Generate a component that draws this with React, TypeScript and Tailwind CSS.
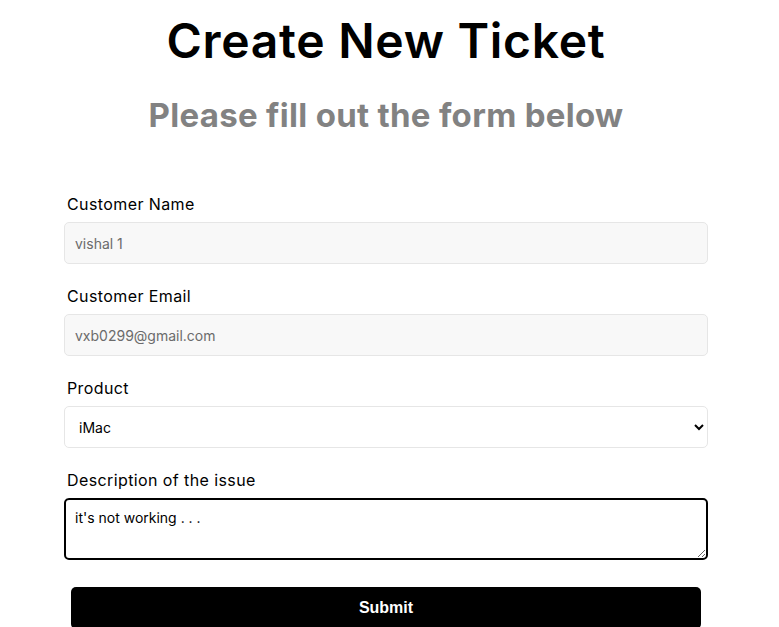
import React from 'react';

const fieldLabel = 'block h-6 text-[16px] leading-6 tracking-[0.4px] text-black pl-[3px] mb-[6px]';
const readOnlyInput =
  'block w-full h-[42px] rounded-[5px] border border-[#e6e6e6] bg-[#f8f8f8] px-[10px] text-[14px] text-[#6b6b6b] outline-none';

const App: React.FC = () => {
  return (
    <div className="min-h-screen bg-white pl-[64px] pr-[71px] font-['Inter',sans-serif] text-black">
      <header className="text-center">
        <h1 className="pt-[12px] text-[48px] font-semibold leading-[58px] tracking-[0.7px]">Create New Ticket</h1>
        <h2 className="mt-[25px] text-[33px] font-bold leading-[40px] tracking-[0.3px] text-[#828282]">Please fill out the form below</h2>
      </header>

      <form className="mt-[57px]" onSubmit={(e) => e.preventDefault()}>
        <div className="mb-[20px]">
          <label className={fieldLabel}>Customer Name</label>
          <input className={readOnlyInput} type="text" value="vishal 1" disabled readOnly />
        </div>

        <div className="mb-[20px]">
          <label className={fieldLabel}>Customer Email</label>
          <input className={readOnlyInput} type="text" value="vxb0299@gmail.com" disabled readOnly />
        </div>

        <div className="mb-[20px]">
          <label className={fieldLabel}>Product</label>
          <select
            className="block w-full h-[42px] rounded-[5px] border border-[#e6e6e6] bg-white px-[10px] text-[14px] text-black outline-none"
            defaultValue="iMac"
          >
            <option value="iPhone">iPhone</option>
            <option value="Macbook Pro">Macbook Pro</option>
            <option value="iMac">iMac</option>
            <option value="iPad">iPad</option>
          </select>
        </div>

        <div className="mb-[27px]">
          <label className={fieldLabel}>Description of the issue</label>
          <textarea
            className="block w-full h-[62px] rounded-[5px] border-2 border-black bg-white px-[9px] py-[9px] text-[14px] leading-[18px] text-black outline-none"
            defaultValue="it's not working . . ."
          />
        </div>

        <div className="px-[7px]">
          <button
            type="submit"
            className="block w-full h-[42px] rounded-[5px] bg-black text-center font-['Liberation_Sans',Arial,sans-serif] text-[16px] font-bold text-white"
          >
            Submit
          </button>
        </div>
      </form>
    </div>
  );
};

export default App;
